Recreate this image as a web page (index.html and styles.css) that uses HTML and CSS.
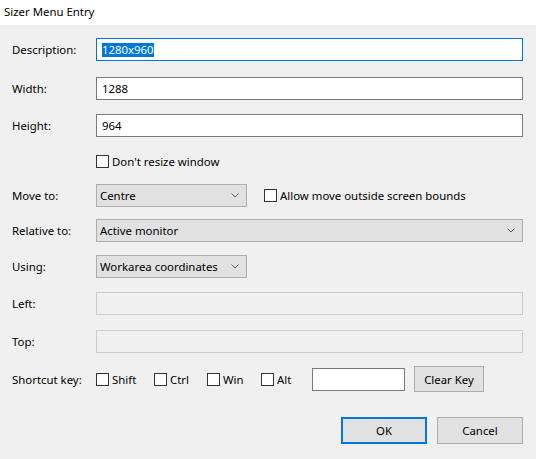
FILE: index.html
```html
<!DOCTYPE html>
<html>
<head>
<meta charset="utf-8">
<link rel="stylesheet" href="styles.css">
</head>
<body>
<div class="window">
  <div class="titlebar">Sizer Menu Entry</div>
  <div class="form">
    <div class="row r-desc">
      <div class="lbl">Description:</div>
      <div class="edit focused"><span class="sel">1280x960</span></div>
    </div>
    <div class="row r-width">
      <div class="lbl">Width:</div>
      <div class="edit">1288</div>
    </div>
    <div class="row r-height">
      <div class="lbl">Height:</div>
      <div class="edit">964</div>
    </div>
    <div class="row r-check">
      <div class="lbl"></div>
      <div class="check"><span class="box"></span><span>Don't resize window</span></div>
    </div>
    <div class="row r-move">
      <div class="lbl">Move to:</div>
      <div class="inline">
        <div class="combo small"><span>Centre</span><svg class="chev" width="8" height="5" viewBox="0 0 8 5"><polyline points="0.5,0.5 4,4 7.5,0.5" fill="none" stroke="#606060" stroke-width="1"/></svg></div>
        <div class="check allow"><span class="box"></span><span>Allow move outside screen bounds</span></div>
      </div>
    </div>
    <div class="row r-rel">
      <div class="lbl">Relative to:</div>
      <div class="combo"><span>Active monitor</span><svg class="chev" width="8" height="5" viewBox="0 0 8 5"><polyline points="0.5,0.5 4,4 7.5,0.5" fill="none" stroke="#606060" stroke-width="1"/></svg></div>
    </div>
    <div class="row r-using">
      <div class="lbl">Using:</div>
      <div class="inline">
        <div class="combo small"><span>Workarea coordinates</span><svg class="chev" width="8" height="5" viewBox="0 0 8 5"><polyline points="0.5,0.5 4,4 7.5,0.5" fill="none" stroke="#606060" stroke-width="1"/></svg></div>
      </div>
    </div>
    <div class="row r-left">
      <div class="lbl">Left:</div>
      <div class="edit disabled"></div>
    </div>
    <div class="row r-top">
      <div class="lbl">Top:</div>
      <div class="edit disabled"></div>
    </div>
    <div class="row r-key">
      <div class="lbl">Shortcut key:</div>
      <div class="inline">
        <div class="check k-shift"><span class="box"></span><span>Shift</span></div>
        <div class="check k-ctrl"><span class="box"></span><span>Ctrl</span></div>
        <div class="check k-win"><span class="box"></span><span>Win</span></div>
        <div class="check k-alt"><span class="box"></span><span>Alt</span></div>
        <div class="edit keybox"></div>
        <div class="btn clear">Clear Key</div>
      </div>
    </div>
    <div class="buttons">
      <div class="btn big default">OK</div>
      <div class="btn big">Cancel</div>
    </div>
  </div>
</div>
</body>
</html>
```
FILE: styles.css
```css
html, body {
  margin: 0;
  padding: 0;
  background: #f0f0f0;
}
body {
  font-family: "Noto Sans", "Open Sans", "DejaVu Sans", sans-serif;
  font-size: 11.4px;
  color: #000;
}
.window {
  width: 536px;
  height: 459px;
  background: #f0f0f0;
  overflow: hidden;
}
.titlebar {
  height: 25px;
  background: #fff;
  padding-left: 4px;
  line-height: 24px;
  box-sizing: border-box;
}
.form {
  padding: 0 13px 0 12px;
}
.row {
  display: grid;
  grid-template-columns: 84px 1fr;
  align-items: center;
  height: 23px;
}
.r-desc { margin-top: 13px; }
.r-width { margin-top: 16px; }
.r-height { margin-top: 14px; }
.r-check { margin-top: 13px; }
.r-move { margin-top: 11px; }
.r-rel { margin-top: 12px; }
.r-using { margin-top: 13px; }
.r-left { margin-top: 14px; }
.r-top { margin-top: 15px; }
.r-key { margin-top: 13px; height: 26px; }
.lbl {
  white-space: nowrap;
}
.edit {
  height: 23px;
  box-sizing: border-box;
  border: 1px solid #7a7a7a;
  background: #fff;
  padding-left: 5px;
  display: flex;
  align-items: center;
  white-space: nowrap;
}
.edit.focused {
  border-color: #0078d7;
}
.edit.disabled {
  border-color: #cccccc;
  background: #f0f0f0;
}
.sel {
  background: #0078d7;
  color: #fff;
  line-height: 14px;
}
.check {
  display: flex;
  align-items: center;
  gap: 3px;
  white-space: nowrap;
}
.box {
  width: 13px;
  height: 13px;
  box-sizing: border-box;
  border: 1px solid #333;
  background: #fff;
  flex: none;
}
.inline {
  display: flex;
  align-items: center;
}
.combo {
  height: 23px;
  box-sizing: border-box;
  border: 1px solid #adadad;
  background: #e1e1e1;
  display: flex;
  align-items: center;
  justify-content: space-between;
  padding: 0 7px 0 3px;
  white-space: nowrap;
}
.combo.small {
  width: 151px;
}
.chev {
  display: block;
  flex: none;
}
.allow {
  margin-left: 17px;
}
.k-shift { width: 58px; }
.k-ctrl { width: 53px; }
.k-win { width: 54px; }
.k-alt { width: 51px; }
.keybox {
  width: 93px;
}
.btn {
  box-sizing: border-box;
  border: 1px solid #adadad;
  background: #e1e1e1;
  display: flex;
  align-items: center;
  justify-content: center;
  white-space: nowrap;
}
.clear {
  width: 70px;
  height: 26px;
  margin-left: 9px;
}
.buttons {
  display: flex;
  justify-content: flex-end;
  gap: 10px;
  margin-top: 25px;
}
.big {
  width: 86px;
  height: 27px;
}
.default {
  border: 2px solid #0078d7;
}
```
